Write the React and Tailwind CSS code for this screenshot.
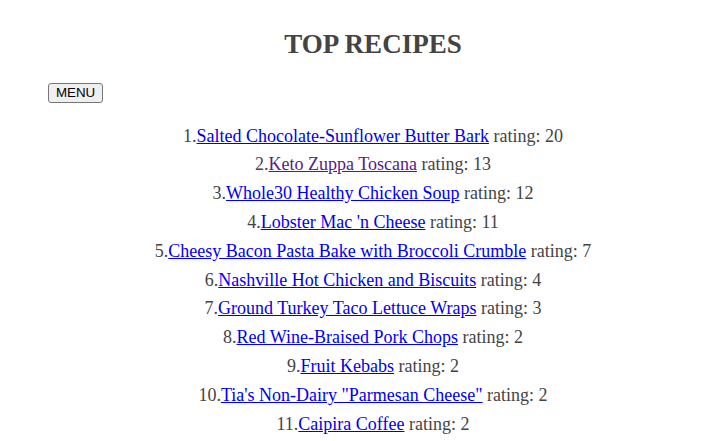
const RECIPES = [
  { name: "Salted Chocolate-Sunflower Butter Bark", rating: 20 },
  { name: "Keto Zuppa Toscana", rating: 13, visited: true },
  { name: "Whole30 Healthy Chicken Soup", rating: 12 },
  { name: "Lobster Mac 'n Cheese", rating: 11 },
  { name: "Cheesy Bacon Pasta Bake with Broccoli Crumble", rating: 7 },
  { name: "Nashville Hot Chicken and Biscuits", rating: 4 },
  { name: "Ground Turkey Taco Lettuce Wraps", rating: 3 },
  { name: "Red Wine-Braised Pork Chops", rating: 2 },
  { name: "Fruit Kebabs", rating: 2 },
  { name: "Tia's Non-Dairy \"Parmesan Cheese\"", rating: 2 },
  { name: "Caipira Coffee", rating: 2 },
];

export default function App() {
  return (
    <div
      className="min-h-screen bg-white text-[#444] pl-[32px]"
      style={{ fontFamily: '"Liberation Serif", "Times New Roman", serif' }}
    >
      <h2 className="pt-[29px] text-center text-[27px] font-bold leading-[31px]">TOP RECIPES</h2>
      <div className="flex pl-[16px] pt-[23px]">
        <button
          type="button"
          className="h-[20px] px-[7px] bg-[#efefef] border border-[#767676] rounded-[3px] text-[13.33px] leading-none text-black"
          style={{ fontFamily: '"Liberation Sans", Arial, sans-serif' }}
        >
          MENU
        </button>
      </div>
      <div className="pt-[18.6px] text-[18px]">
        {RECIPES.map((r, i) => (
          <div key={i} className="text-center leading-[28.8px]">
            {i + 1}.
            <a
              href="#"
              className={r.visited ? "underline text-[#551a8b]" : "underline text-[#0000ee]"}
            >
              {r.name}
            </a>{" "}
            rating: {r.rating}
          </div>
        ))}
      </div>
    </div>
  );
}
